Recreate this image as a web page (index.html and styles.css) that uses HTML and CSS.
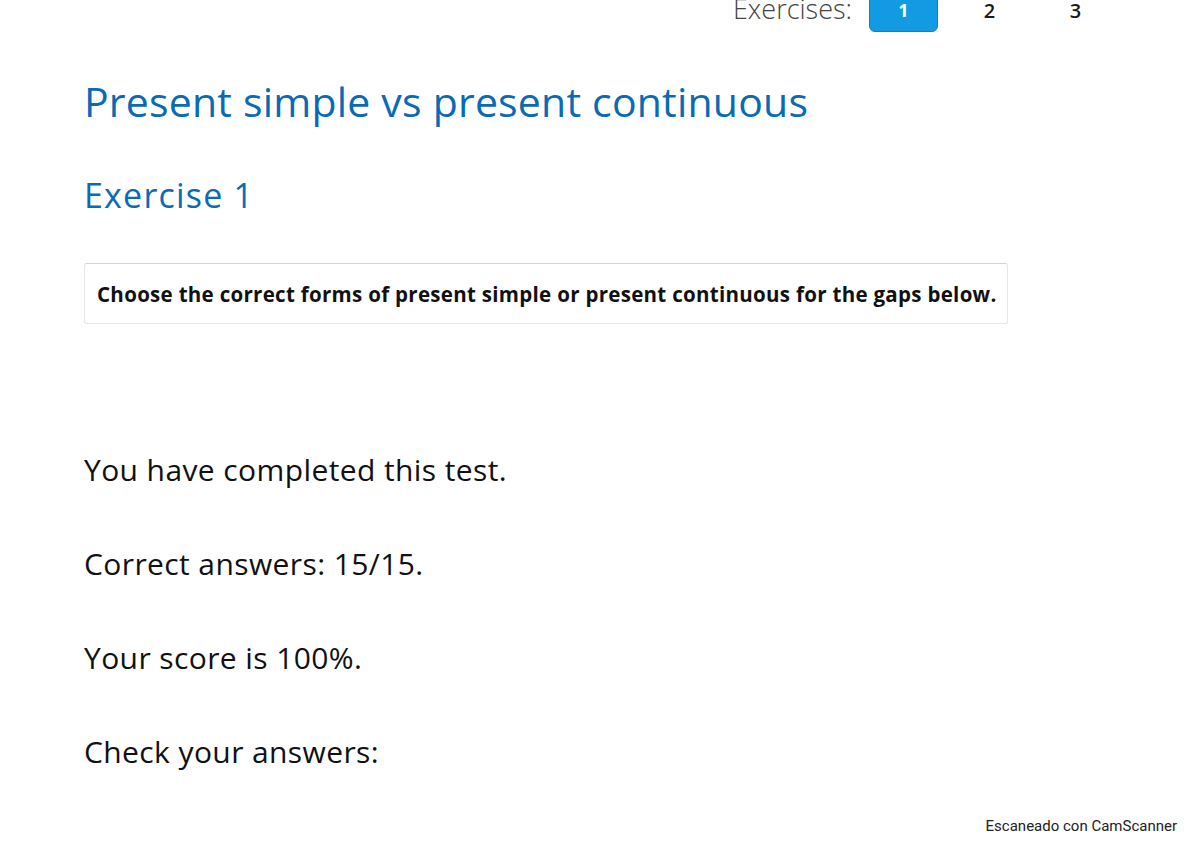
FILE: index.html
```html
<!DOCTYPE html>
<html lang="en">
<head>
<meta charset="utf-8">
<title>Present simple vs present continuous</title>
<link rel="stylesheet" href="styles.css">
</head>
<body>
<div class="page">
  <header class="exnav">
    <span class="exnav-label">Exercises:</span>
    <a class="exnav-item active">1</a>
    <a class="exnav-item">2</a>
    <a class="exnav-item">3</a>
  </header>
  <main class="content">
    <h1 class="title">Present simple vs present continuous</h1>
    <h2 class="subtitle">Exercise 1</h2>
    <div class="instructions">Choose the correct forms of present simple or present continuous for the gaps below.</div>
    <div class="results">
      <p class="result-line">You have completed this test.</p>
      <p class="result-line">Correct answers: 15/15.</p>
      <p class="result-line">Your score is 100%.</p>
      <p class="result-line">Check your answers:</p>
    </div>
  </main>
  <footer class="watermark">Escaneado con CamScanner</footer>
</div>
</body>
</html>
```
FILE: styles.css
```css
html, body {
  margin: 0;
  padding: 0;
  background: #ffffff;
}
body {
  font-family: "Open Sans", "Liberation Sans", sans-serif;
  color: #111111;
  overflow: hidden;
}
.page {
  width: 1200px;
  height: 848px;
  overflow: hidden;
}
.exnav {
  display: flex;
  justify-content: flex-end;
  align-items: center;
  gap: 17px;
  height: 46px;
  margin-top: -14px;
  padding-right: 90px;
}
.exnav-label {
  font-size: 27px;
  font-weight: 300;
  color: #444444;
  line-height: 40px;
}
.exnav-item {
  width: 69px;
  height: 46px;
  box-sizing: border-box;
  display: flex;
  align-items: center;
  justify-content: center;
  padding-top: 2px;
  font-size: 20px;
  font-weight: 600;
  color: #1a1a1a;
}
.exnav-item.active {
  background: #129be2;
  border: 1px solid #0c82c6;
  border-radius: 6px;
  color: #ffffff;
  font-size: 18px;
  font-weight: 700;
}
.content {
  padding-left: 84px;
}
.title {
  margin: 45px 0 0 0;
  font-size: 41px;
  line-height: 48px;
  font-weight: 400;
  letter-spacing: 0.2px;
  color: #0a6ab4;
}
.subtitle {
  margin: 50px 0 0 0;
  font-size: 34px;
  line-height: 40px;
  font-weight: 400;
  letter-spacing: 1.2px;
  color: #0a6ab4;
}
.instructions {
  margin-top: 48px;
  width: 924px;
  height: 61px;
  box-sizing: border-box;
  border: 1px solid #e6e6e6;
  border-top-color: #d4d4d4;
  border-radius: 3px;
  padding: 0 12px;
  display: flex;
  align-items: center;
  font-size: 20.5px;
  font-weight: 700;
  letter-spacing: 0.3px;
  color: #111111;
  white-space: nowrap;
}
.results {
  margin-top: 126px;
  display: flex;
  flex-direction: column;
  gap: 54px;
}
.result-line {
  margin: 0;
  font-size: 30px;
  line-height: 40px;
  letter-spacing: 0.4px;
  color: #111111;
}
.watermark {
  margin-top: 44px;
  padding-right: 23px;
  text-align: right;
  font-family: Roboto, "Liberation Sans", sans-serif;
  font-size: 15px;
  line-height: 20px;
  color: #222222;
}
```
